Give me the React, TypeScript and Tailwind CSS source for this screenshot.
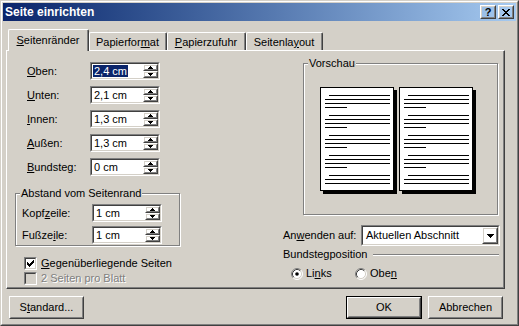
import React from "react";

type Kids = { children?: React.ReactNode; className?: string };

// classic 3d frames
function Raised({ children, className = "" }: Kids) {
  return (
    <div className={`border border-t-white border-l-white border-r-[#404040] border-b-[#404040] ${className}`}>
      <div className="w-full h-full border border-t-[#d4d0c8] border-l-[#d4d0c8] border-r-[#808080] border-b-[#808080] flex items-center justify-center">
        {children}
      </div>
    </div>
  );
}

function Sunken({ children, className = "", bg = "bg-white" }: Kids & { bg?: string }) {
  return (
    <div className={`border border-t-[#808080] border-l-[#808080] border-r-white border-b-white ${className}`}>
      <div className={`w-full h-full border border-t-[#404040] border-l-[#404040] border-r-[#d4d0c8] border-b-[#d4d0c8] ${bg}`}>
        {children}
      </div>
    </div>
  );
}

function Arrow({ up }: { up?: boolean }) {
  return (
    <svg width="5" height="3" viewBox="0 0 5 3" shapeRendering="crispEdges" className="block">
      {up ? (
        <>
          <rect x="2" y="0" width="1" height="1" />
          <rect x="1" y="1" width="3" height="1" />
          <rect x="0" y="2" width="5" height="1" />
        </>
      ) : (
        <>
          <rect x="0" y="0" width="5" height="1" />
          <rect x="1" y="1" width="3" height="1" />
          <rect x="2" y="2" width="1" height="1" />
        </>
      )}
    </svg>
  );
}

function Spin({ value, selected }: { value: string; selected?: boolean }) {
  return (
    <Sunken className="w-[70px] h-[18px]">
      <div className="flex h-full">
        <div className="flex-1 flex items-center pl-px">
          {selected ? (
            <span className="bg-[#0a246a] text-white px-px leading-[12px]">{value}</span>
          ) : (
            <span className="px-px">{value}</span>
          )}
        </div>
        <div className="flex flex-col w-[15px]">
          <Raised className="h-[7px]">
            <Arrow up />
          </Raised>
          <Raised className="h-[7px]">
            <Arrow />
          </Raised>
        </div>
      </div>
    </Sunken>
  );
}

function GroupBox({ label, children, className = "" }: Kids & { label: string }) {
  return (
    <div className={`relative border border-[#808080] shadow-[inset_1px_1px_0_#fff,1px_1px_0_#fff] ${className}`}>
      <span className="absolute -top-[7px] left-[4px] bg-[#d4d0c8] px-px">{label}</span>
      {children}
    </div>
  );
}

function Tab({ children, active, w }: Kids & { active?: boolean; w: string }) {
  return (
    <div
      className={`${w} ${active ? "h-[22px] z-10" : "h-[18px] mb-px"} relative bg-[#d4d0c8] border-l border-t border-r border-l-white border-t-white border-r-[#404040] rounded-t-[2px]`}
    >
      <div className={`h-full border-r border-r-[#808080] flex justify-center ${active ? "pt-[4px]" : "pt-[3px]"}`}>
        {children}
      </div>
    </div>
  );
}

function Page() {
  const rects: React.ReactNode[] = [];
  for (let g = 0; g < 5; g++) {
    const y = 7 + g * 20;
    rects.push(<rect key={`a${g}`} x="8" y={y} width="61" height="1" />);
    rects.push(<rect key={`b${g}`} x="4" y={y + 4} width="65" height="1" />);
    rects.push(<rect key={`c${g}`} x="4" y={y + 8} width="65" height="1" />);
    if (g < 4) {
      rects.push(<rect key={`d${g}`} x="4" y={y + 12} width="22" height="1" />);
    }
  }
  return (
    <div className="w-[74px] h-[104px] border border-black bg-white shadow-[3px_3px_0_#000]">
      <svg width="72" height="102" viewBox="0 0 72 102" shapeRendering="crispEdges" className="block">
        {rects}
      </svg>
    </div>
  );
}

function CheckBox({ checked, disabled }: { checked?: boolean; disabled?: boolean }) {
  return (
    <Sunken className="w-[13px] h-[13px]" bg={disabled ? "bg-[#d4d0c8]" : "bg-white"}>
      {checked && (
        <svg width="7" height="7" viewBox="0 0 7 7" shapeRendering="crispEdges" className="block ml-px mt-px">
          <rect x="0" y="2" width="1" height="3" />
          <rect x="1" y="3" width="1" height="3" />
          <rect x="2" y="4" width="1" height="3" />
          <rect x="3" y="3" width="1" height="3" />
          <rect x="4" y="2" width="1" height="3" />
          <rect x="5" y="1" width="1" height="3" />
          <rect x="6" y="0" width="1" height="3" />
        </svg>
      )}
    </Sunken>
  );
}

function Radio({ checked }: { checked?: boolean }) {
  return (
    <svg width="12" height="12" viewBox="0 0 12 12" className="block">
      <circle cx="6" cy="6" r="5" fill="#fff" />
      <path d="M2.11 9.89 A5.5 5.5 0 0 1 9.89 2.11" fill="none" stroke="#808080" strokeWidth="1" />
      <path d="M9.89 2.11 A5.5 5.5 0 0 1 2.11 9.89" fill="none" stroke="#fff" strokeWidth="1" />
      <path d="M2.82 9.18 A4.5 4.5 0 0 1 9.18 2.82" fill="none" stroke="#404040" strokeWidth="1" />
      <path d="M9.18 2.82 A4.5 4.5 0 0 1 2.82 9.18" fill="none" stroke="#d4d0c8" strokeWidth="1" />
      {checked && <circle cx="6" cy="6" r="1.8" fill="#000" />}
    </svg>
  );
}

const marginRows = [
  { label: <><u>O</u>ben:</>, value: "2,4 cm", selected: true },
  { label: <><u>U</u>nten:</>, value: "2,1 cm" },
  { label: <><u>I</u>nnen:</>, value: "1,3 cm" },
  { label: <><u>A</u>ußen:</>, value: "1,3 cm" },
  { label: <><u>B</u>undsteg:</>, value: "0 cm" },
];

export default function App() {
  return (
    <div className="w-[519px] h-[326px] overflow-hidden font-['Liberation_Sans',Arial,sans-serif] text-[11px] leading-[13px] text-black">
      <div className="h-full border border-t-[#d4d0c8] border-l-[#d4d0c8] border-r-[#404040] border-b-[#404040]">
        <div className="h-full border border-t-white border-l-white border-r-[#808080] border-b-[#808080] bg-[#d4d0c8] p-px">
          {/* title bar */}
          <div className="h-[18px] flex items-center bg-linear-to-r from-[#0a246a] to-[#a6caf0] px-[2px]">
            <span className="flex-1 text-white font-bold text-[12px]">Seite einrichten</span>
            <Raised className="w-[16px] h-[14px]">
              <span className="font-bold text-[11px] leading-[10px]">?</span>
            </Raised>
            <Raised className="w-[16px] h-[14px] ml-[2px]">
              <svg width="8" height="7" viewBox="0 0 8 7" shapeRendering="crispEdges" className="block">
                <path d="M0 0h2v1H0zM6 0h2v1H6zM1 1h2v1H1zM5 1h2v1H5zM2 2h4v1H2zM3 3h2v1H3zM2 4h4v1H2zM1 5h2v1H1zM5 5h2v1H5zM0 6h2v1H0zM6 6h2v1H6z" />
              </svg>
            </Raised>
          </div>

          {/* tabs */}
          <div className="flex items-end pt-[8px] pl-[5px] -mb-px">
            <Tab active w="w-[81px]">
              <span><u>S</u>eitenränder</span>
            </Tab>
            <Tab w="w-[78px]">
              <span>Papierfor<u>m</u>at</span>
            </Tab>
            <Tab w="w-[79px]">
              <span><u>P</u>apierzufuhr</span>
            </Tab>
            <Tab w="w-[77px]">
              <span>Seitenla<u>y</u>out</span>
            </Tab>
          </div>

          {/* panel */}
          <div className="ml-[3px] w-[499px] h-[239px] border-l border-t border-r border-b border-l-white border-t-white border-r-[#404040] border-b-[#404040]">
            <div className="h-full border-r border-b border-r-[#808080] border-b-[#808080] flex">
              {/* left column */}
              <div className="w-[276px] pl-[8px] pt-[11px]">
                <div className="flex flex-col gap-[6px] pl-[12px]">
                  {marginRows.map((r, i) => (
                    <div key={i} className="flex items-center">
                      <span className="w-[63px]">{r.label}</span>
                      <Spin value={r.value} selected={r.selected} />
                    </div>
                  ))}
                </div>

                <GroupBox label="Abstand vom Seitenrand" className="mt-[17px] w-[165px] h-[53px]">
                  <div className="flex flex-col gap-[4px] pt-[10px] pl-[6px]">
                    <div className="flex items-center">
                      <span className="w-[70px]">Kopf<u>z</u>eile:</span>
                      <Spin value="1 cm" />
                    </div>
                    <div className="flex items-center">
                      <span className="w-[70px]">Fußze<u>i</u>le:</span>
                      <Spin value="1 cm" />
                    </div>
                  </div>
                </GroupBox>

                <div className="mt-[11px] pl-[9px] flex flex-col gap-[2px]">
                  <div className="flex items-center h-[13px]">
                    <CheckBox checked />
                    <span className="ml-[4px]"><u>G</u>egenüberliegende Seiten</span>
                  </div>
                  <div className="flex items-center h-[13px]">
                    <CheckBox disabled />
                    <span className="ml-[4px] text-[#808080] [text-shadow:1px_1px_0_#fff]">2 Seiten pro Blatt</span>
                  </div>
                </div>
              </div>

              {/* right column */}
              <div className="flex-1 pt-[12px]">
                <GroupBox label="Vorschau" className="ml-[20px] w-[195px] h-[152px]">
                  <div className="flex gap-[5px] pl-[16px] pt-[23px]">
                    <Page />
                    <Page />
                  </div>
                </GroupBox>

                <div className="mt-[10px] flex items-center">
                  <span className="w-[78px]">An<u>w</u>enden auf:</span>
                  <Sunken className="w-[139px] h-[21px]">
                    <div className="flex h-full items-center">
                      <span className="flex-1 pl-[3px]">Aktuellen Abschnitt</span>
                      <Raised className="w-[16px] h-[17px]">
                        <svg width="7" height="4" viewBox="0 0 7 4" shapeRendering="crispEdges" className="block">
                          <path d="M0 0h7v1H0zM1 1h5v1H1zM2 2h3v1H2zM3 3h1v1H3z" />
                        </svg>
                      </Raised>
                    </div>
                  </Sunken>
                </div>

                <div className="mt-[2px] flex items-center h-[13px] mr-[4px]">
                  <span>Bundstegposition</span>
                  <div className="flex-1 ml-[6px] h-[2px] border-t border-t-[#808080] border-b border-b-white" />
                </div>

                <div className="mt-[6px] flex items-center pl-[8px]">
                  <div className="w-[64px] flex items-center">
                    <Radio checked />
                    <span className="ml-[3px]">Li<u>n</u>ks</span>
                  </div>
                  <div className="flex items-center">
                    <Radio />
                    <span className="ml-[3px]">Obe<u>n</u></span>
                  </div>
                </div>
              </div>
            </div>
          </div>

          {/* buttons */}
          <div className="mt-[7px] flex pl-[6px] pr-[13px]">
            <Raised className="w-[75px] h-[23px]">
              <span>S<u>t</u>andard...</span>
            </Raised>
            <div className="ml-auto w-[76px] h-[23px] border border-black">
              <Raised className="w-full h-full">
                <span>OK</span>
              </Raised>
            </div>
            <Raised className="ml-[6px] w-[75px] h-[23px]">
              <span>Abbrechen</span>
            </Raised>
          </div>
        </div>
      </div>
    </div>
  );
}
